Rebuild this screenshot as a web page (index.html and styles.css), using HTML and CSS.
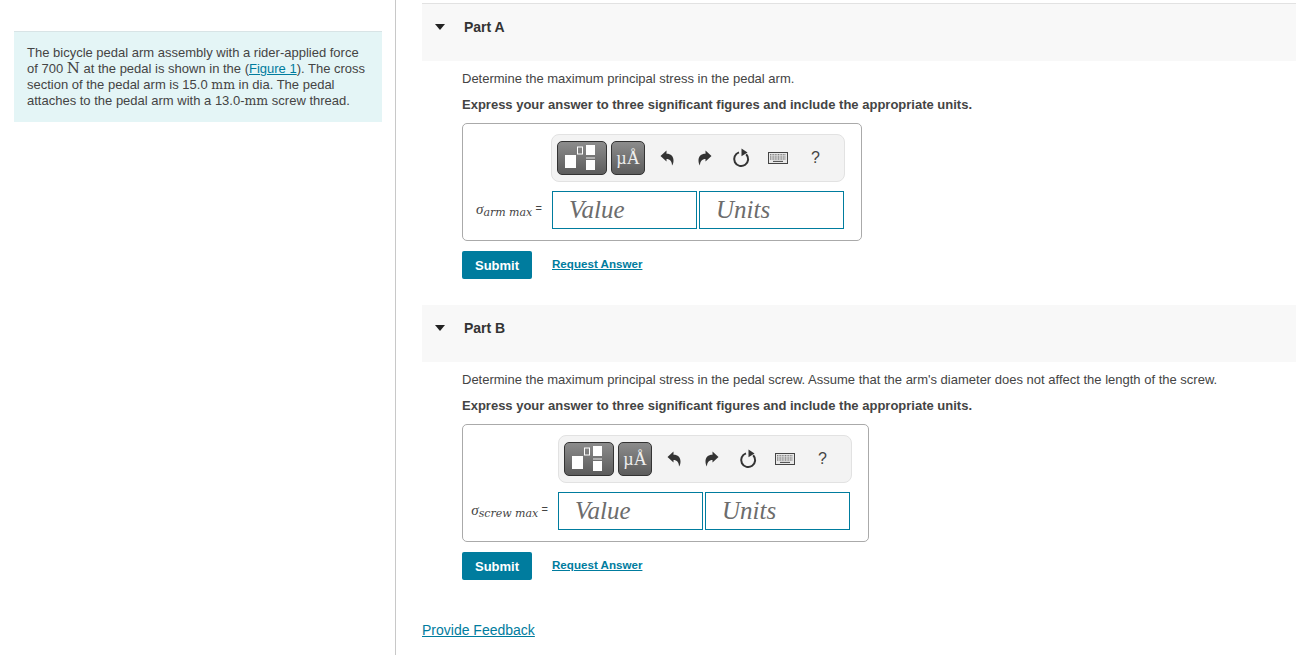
FILE: index.html

```html
<!DOCTYPE html>
<html lang="en">
<head>
  <meta charset="UTF-8">
  <title>Bicycle Pedal Arm</title>
  <link rel="stylesheet" href="styles.css">
</head>
<body>
  <svg class="defs" width="0" height="0">
    <symbol id="undo" viewBox="0 0 14 16"><path d="M0.5 6 L6.5 0.5 V3.8 C11 3.8 13.5 6.5 13.5 10.5 C13.5 12.6 13 14 12 15.5 C12 11.5 10 9 6.5 9 V11.5 Z" fill="#333"/></symbol>
    <symbol id="redo" viewBox="0 0 14 16"><path d="M13.5 6 L7.5 0.5 V3.8 C3 3.8 0.5 6.5 0.5 10.5 C0.5 12.6 1 14 2 15.5 C2 11.5 4 9 7.5 9 V11.5 Z" fill="#333"/></symbol>
    <symbol id="reset" viewBox="0 0 18 20"><path d="M7 4.4 A7 7 0 1 0 14.2 6.2" fill="none" stroke="#333" stroke-width="2"/><path d="M9.5 0.5 L15.5 4.6 L9.5 8.2 Z" fill="#333"/></symbol>
    <symbol id="keys" viewBox="0 0 20 12"><rect x="0.5" y="0.5" width="19" height="11" fill="#e8e8e8" stroke="#444"/><path d="M2 2.8 H18 M2 5 H18 M2 7 H18" stroke="#555" stroke-dasharray="1 .6"/><path d="M5 9.4 H15" stroke="#444"/></symbol>
    <symbol id="frac" viewBox="0 0 36 26"><rect x="1" y="10" width="11" height="13" fill="#fff"/><rect x="13.5" y="2" width="5" height="7" fill="none" stroke="#fff"/><rect x="22" y="0" width="9" height="10" fill="#fff"/><rect x="22" y="12.5" width="9" height="1" fill="#eee"/><rect x="22" y="15" width="9" height="10" fill="#fff"/></symbol>
  </svg>

  <div class="page">
    <aside class="left">
      <div class="intro">
        The bicycle pedal arm assembly with a rider-applied force of 700 <span class="math n">N</span> at the pedal is shown in the (<a href="#">Figure 1</a>). The cross section of the pedal arm is 15.0 <span class="math">mm</span> in dia. The pedal attaches to the pedal arm with a 13.0-<span class="math">mm</span> screw thread.
      </div>
    </aside>

    <main class="right">
      <section class="part part-a">
        <div class="part-head"><span class="caret"></span><h2>Part A</h2></div>
        <div class="part-body">
          <p class="question">Determine the maximum principal stress in the pedal arm.</p>
          <p class="hint">Express your answer to three significant figures and include the appropriate units.</p>
          <div class="answer">
            <div class="toolbar">
              <button class="tool tool-frac" aria-label="Templates"><svg class="frac"><use href="#frac"/></svg></button>
              <button class="tool tool-unit">µÅ</button>
              <svg class="icon undo"><use href="#undo"/></svg>
              <svg class="icon redo"><use href="#redo"/></svg>
              <svg class="icon reset"><use href="#reset"/></svg>
              <svg class="icon keys"><use href="#keys"/></svg>
              <span class="help">?</span>
            </div>
            <div class="answer-row">
              <span class="label"><i>σ</i><sub>arm max</sub> <span class="eq">=</span></span>
              <input class="field" placeholder="Value">
              <input class="field" placeholder="Units">
            </div>
          </div>
          <div class="actions"><button class="submit">Submit</button><a class="request" href="#">Request Answer</a></div>
        </div>
      </section>

      <section class="part part-b">
        <div class="part-head"><span class="caret"></span><h2>Part B</h2></div>
        <div class="part-body">
          <p class="question">Determine the maximum principal stress in the pedal screw. Assume that the arm's diameter does not affect the length of the screw.</p>
          <p class="hint">Express your answer to three significant figures and include the appropriate units.</p>
          <div class="answer answer-wide">
            <div class="toolbar">
              <button class="tool tool-frac" aria-label="Templates"><svg class="frac"><use href="#frac"/></svg></button>
              <button class="tool tool-unit">µÅ</button>
              <svg class="icon undo"><use href="#undo"/></svg>
              <svg class="icon redo"><use href="#redo"/></svg>
              <svg class="icon reset"><use href="#reset"/></svg>
              <svg class="icon keys"><use href="#keys"/></svg>
              <span class="help">?</span>
            </div>
            <div class="answer-row">
              <span class="label"><i>σ</i><sub>screw max</sub> <span class="eq">=</span></span>
              <input class="field" placeholder="Value">
              <input class="field" placeholder="Units">
            </div>
          </div>
          <div class="actions"><button class="submit">Submit</button><a class="request" href="#">Request Answer</a></div>
        </div>
      </section>

      <a class="feedback" href="#">Provide Feedback</a>
    </main>
  </div>
</body>
</html>
```

FILE: styles.css

```css
html, body { margin: 0; height: 655px; overflow: hidden; background: #fff; }
body { font-family: "Liberation Sans", Arial, sans-serif; font-size: 13px; color: #444; }
a { color: #007c9e; }
.defs { position: absolute; }

.page { display: flex; height: 655px; }
.left { width: 395px; border-right: 1px solid #c8c8c8; padding-top: 31px; flex: none; }
.intro { margin-left: 14px; width: 368px; height: 91px; box-sizing: border-box; padding: 13px 13px 0; background: #e4f5f6; border-top: 1px solid #d8e4e6; line-height: 16px; }
.math { font-family: "DejaVu Serif", serif; font-size: 12.5px; line-height: 14px; }
.math.n { font-size: 15px; }

.right { flex: 1; padding: 3px 0 0 26px; }
.part-head { height: 57px; background: #f8f8f8; display: flex; align-items: flex-start; box-sizing: border-box; }
.part-a .part-head { height: 58px; border-top: 1px solid #e2e2e2; }
.part-b .part-head { margin-top: 26px; }
.caret { width: 0; height: 0; margin: 20px 0 0 13px; border-left: 5.5px solid transparent; border-right: 5.5px solid transparent; border-top: 6px solid #222; }
h2 { margin: 15px 0 0 19px; font-size: 14px; font-weight: bold; line-height: 16px; color: #333; }

.part-body { padding-left: 40px; }
.question { margin: 0; padding-top: 10px; line-height: 15px; }
.hint { margin: 0; padding-top: 11px; line-height: 15px; font-weight: bold; }
.answer { width: 400px; height: 118px; margin-top: 11px; box-sizing: border-box; border: 1px solid #aaa; border-radius: 5px; padding: 10px 16px 0 0; display: flex; flex-direction: column; align-items: flex-end; }
.answer-wide { width: 407px; }
.toolbar { width: 294px; height: 48px; box-sizing: border-box; background: #f3f3f3; border: 1px solid #e2e2e2; border-radius: 8px; display: flex; align-items: center; padding-left: 5px; }
.tool { height: 34px; box-sizing: border-box; border: 1px solid #333; border-radius: 5px; padding: 0; background: linear-gradient(#8c8c8c, #5c5c5c); color: #fff; display: flex; align-items: center; justify-content: center; }
.tool-frac { width: 50px; }
.frac { width: 36px; height: 26px; }
.tool-unit { width: 34px; margin-left: 4px; font-family: "Liberation Serif", serif; font-size: 18px; color: #eee; }
.icon { display: block; flex: none; }
.undo { width: 14px; height: 16px; margin-left: 15px; }
.redo { width: 14px; height: 16px; margin-left: 24px; }
.reset { width: 18px; height: 20px; margin-left: 20px; }
.keys { width: 20px; height: 12px; margin-left: 18px; }
.help { margin-left: 23px; font-size: 16px; color: #444; }
.answer-row { display: flex; align-items: center; margin-top: 9px; margin-right: 1px; }
.answer-wide .answer-row { margin-right: 2px; }
.label { font-family: "Liberation Serif", serif; margin-right: 10px; font-size: 13px; white-space: nowrap; }
.label i { font-size: 15px; }
.label sub { font-family: "DejaVu Serif", serif; font-style: italic; font-size: 11px; vertical-align: -2px; }
.eq { font-family: "Liberation Sans", sans-serif; font-size: 11px; vertical-align: 2px; }
.field { width: 145px; height: 38px; box-sizing: border-box; border: 1px solid #007c9e; border-radius: 0; padding: 0 16px; margin-left: 2px; background: #fff; font-family: "Liberation Serif", serif; font-style: italic; font-size: 25px; }
.label + .field { margin-left: 0; }
.field::placeholder { color: #6c6c6c; opacity: 1; }

.actions { display: flex; align-items: flex-start; margin-top: 10px; }
.submit { width: 70px; height: 28px; padding: 0; border: 0; border-radius: 2px; background: #007c9e; color: #fff; font: bold 13px "Liberation Sans", sans-serif; }
.request { margin: 5px 0 0 20px; font-size: 11.6px; font-weight: bold; line-height: 16px; }
.feedback { display: block; margin-top: 42px; font-size: 14px; line-height: 16px; }
```
